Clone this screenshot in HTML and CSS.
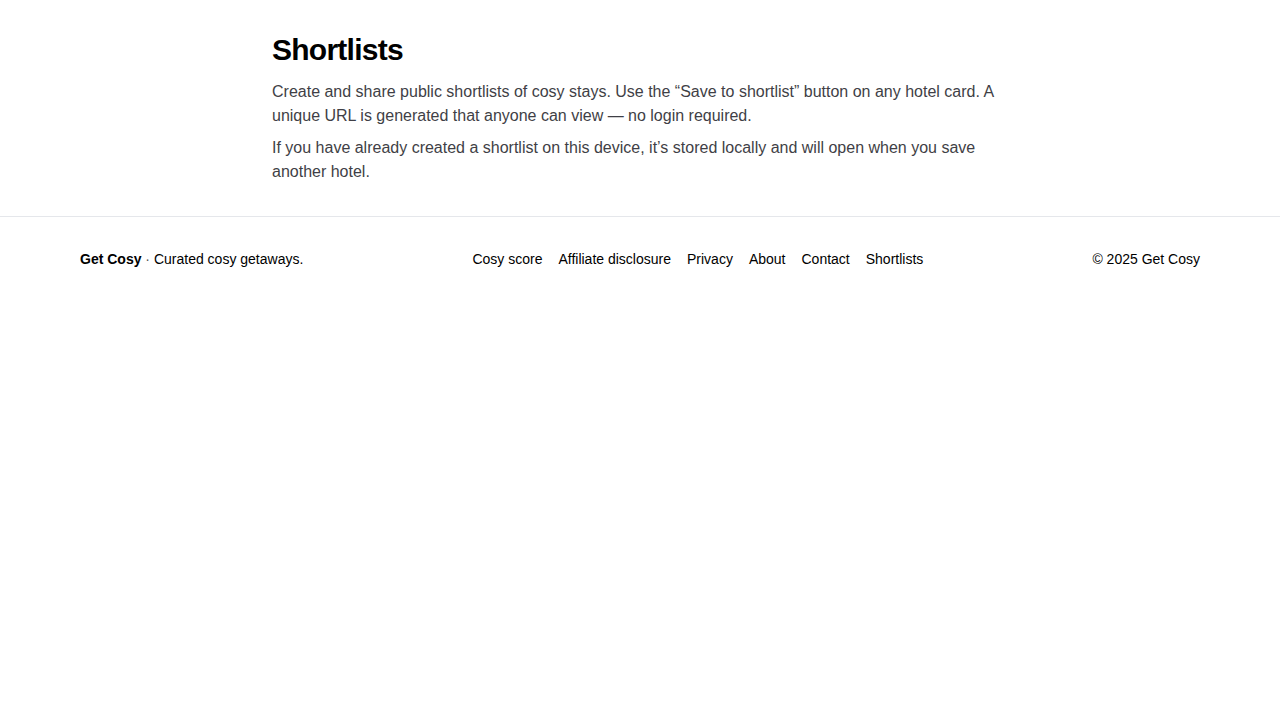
FILE: index.html
```html
<!DOCTYPE html>
<html lang="en">
<head>
<meta charset="utf-8">
<title>Shortlists · Get Cosy</title>
<link rel="stylesheet" href="styles.css">
</head>
<body>
<main class="main">
  <h1 class="title">Shortlists</h1>
  <p class="text">Create and share public shortlists of cosy stays. Use the “Save to shortlist” button on any hotel card. A unique URL is generated that anyone can view — no login required.</p>
  <p class="text">If you have already created a shortlist on this device, it’s stored locally and will open when you save another hotel.</p>
</main>
<footer class="footer">
  <div class="footer-inner">
    <div class="brand"><strong>Get Cosy</strong> <span class="dot">·</span> Curated cosy getaways.</div>
    <nav class="links">
      <a href="#">Cosy score</a>
      <a href="#">Affiliate disclosure</a>
      <a href="#">Privacy</a>
      <a href="#">About</a>
      <a href="#">Contact</a>
      <a href="#">Shortlists</a>
    </nav>
    <div class="copy">© 2025 Get Cosy</div>
  </div>
</footer>
</body>
</html>
```
FILE: styles.css
```css
* { box-sizing: border-box; }
html, body { margin: 0; padding: 0; background: #fff; }
body {
  font-family: "Liberation Sans", Arial, Helvetica, sans-serif;
  color: #000;
}
.main {
  max-width: 768px;
  margin: 0 auto;
  padding: 32px 16px 32px;
}
.title {
  margin: 0 0 12px;
  font-size: 30px;
  line-height: 36px;
  font-weight: 700;
  letter-spacing: -0.025em;
  color: #000;
}
.text {
  margin: 0 0 8px;
  font-size: 16px;
  line-height: 24px;
  color: #3f3f46;
}
.text:last-child { margin-bottom: 0; }
.footer {
  border-top: 1px solid #e5e7eb;
}
.footer-inner {
  display: flex;
  justify-content: space-between;
  align-items: center;
  padding: 32px 80px;
  font-size: 14px;
  line-height: 20px;
  color: #000;
}
.brand strong { font-weight: 700; }
.dot { color: #555; }
.links {
  display: flex;
  gap: 16px;
}
.links a {
  color: #000;
  text-decoration: none;
}
```
